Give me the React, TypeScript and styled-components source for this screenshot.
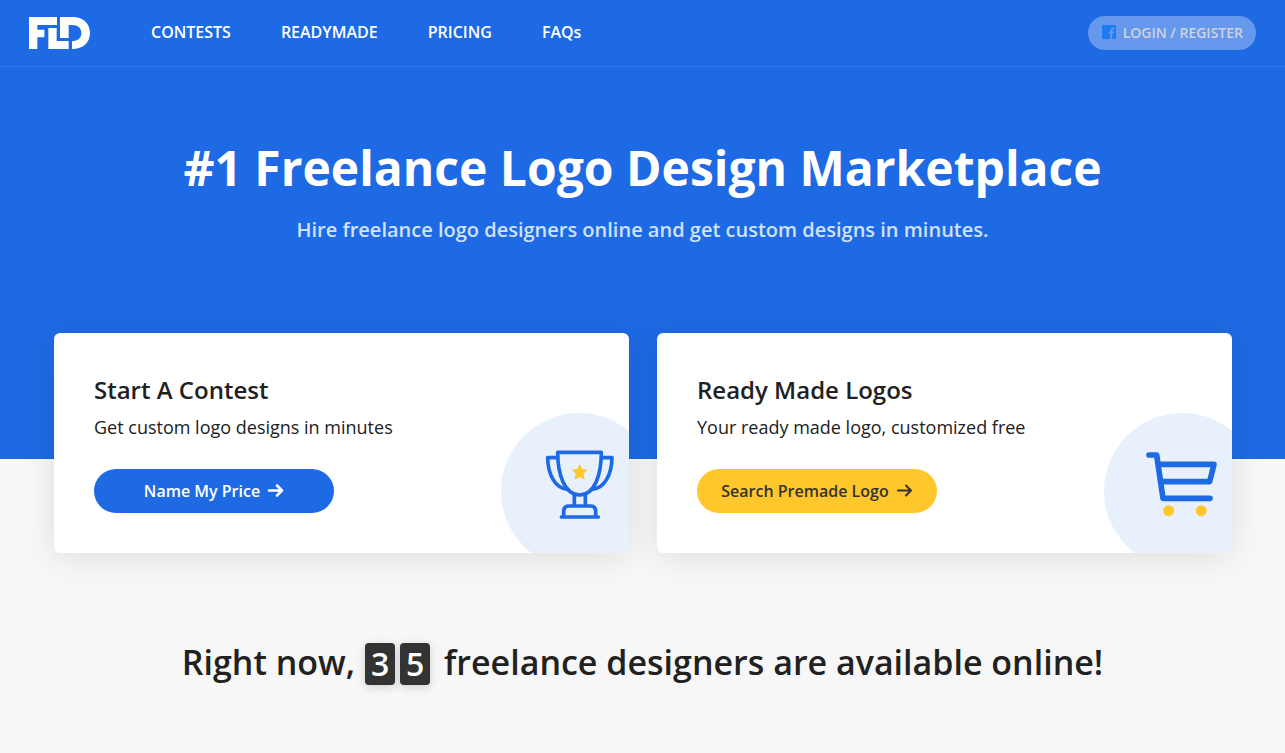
import React from "react";
import styled, { createGlobalStyle, css } from "styled-components";

const blue = "#1e6ae4";
const yellow = "#ffc72c";

const GlobalStyle = createGlobalStyle`
  *, *::before, *::after { box-sizing: border-box; }
  body {
    margin: 0;
    background: #f7f7f7;
    color: #212529;
    font-family: "Open Sans", "Noto Sans", sans-serif;
  }
`;

const Top = styled.div`
  background: ${blue};
  padding-bottom: 126px;
`;

const Header = styled.header`
  display: flex;
  align-items: center;
  height: 67px;
  padding: 0 29px;
  border-bottom: 1px solid #3578e8;
`;

const HomeLink = styled.a`
  display: block;
  width: 61px;
  height: 32px;
  margin-right: 61px;
  svg { display: block; }
`;

const Nav = styled.nav`
  display: flex;
  gap: 50px;
  padding-bottom: 2px;
`;

const NavLink = styled.a`
  color: #fff;
  font-size: 16px;
  font-weight: 600;
  line-height: 24px;
  text-decoration: none;
`;

const LoginButton = styled.button`
  display: flex;
  align-items: center;
  gap: 6px;
  height: 34px;
  margin-left: auto;
  padding: 0 13px 2px;
  border: 0;
  border-radius: 17px;
  background: #6698ed;
  color: #cdd4df;
  font-family: inherit;
  font-size: 14px;
  font-weight: 600;
  cursor: pointer;
`;

const Intro = styled.section`
  padding: 66px 20px 88px;
  text-align: center;
`;

const Title = styled.h1`
  margin: 0 0 12px;
  color: #fff;
  font-size: 48px;
  font-weight: 700;
  line-height: 70px;
`;

const Subtitle = styled.p`
  margin: 0;
  color: #d2e1fa;
  font-size: 20px;
  font-weight: 600;
  line-height: 30px;
`;

const Cards = styled.main`
  display: grid;
  grid-template-columns: 1fr 1fr;
  gap: 28px;
  margin-top: -126px;
  padding: 0 53px 0 54px;
`;

const Card = styled.section`
  position: relative;
  overflow: hidden;
  padding: 40px;
  border-radius: 6px;
  background: #fff;
`;

const CardShadow = styled.div`
  border-radius: 6px;
  box-shadow: 0 4px 32px rgba(0, 0, 0, 0.1);
`;

const CardTitle = styled.h2`
  margin: 0 0 4px;
  color: #212121;
  font-size: 24px;
  font-weight: 600;
  line-height: 34px;
`;

const CardText = styled.p`
  margin: 0 0 26px;
  color: #212121;
  font-size: 18px;
  line-height: 32px;
`;

const CardButton = styled.button<{ $accent?: boolean }>`
  display: flex;
  align-items: center;
  justify-content: center;
  gap: 7px;
  width: 240px;
  height: 44px;
  padding: 0;
  border: 0;
  border-radius: 22px;
  font-family: inherit;
  font-size: 16px;
  font-weight: 600;
  cursor: pointer;
  ${({ $accent }) =>
    $accent
      ? css`background: ${yellow}; color: #333;`
      : css`background: ${blue}; color: #fff;`}
`;

const Disc = styled.div`
  position: absolute;
  right: -28px;
  bottom: -16px;
  width: 156px;
  height: 156px;
  border-radius: 50%;
  background: #e8f0fc;
  svg { display: block; }
`;

const Online = styled.p`
  display: flex;
  align-items: center;
  justify-content: center;
  margin: 0;
  padding: 85px 20px 64px;
  color: #212121;
  font-size: 34px;
  font-weight: 600;
  line-height: 48px;
`;

const Counter = styled.span`
  display: flex;
  gap: 5px;
  margin: 4px 14px 0 10px;
`;

const Digit = styled.span`
  width: 30px;
  height: 42px;
  border-radius: 4px;
  background: #333;
  box-shadow: 0 2px 10px rgba(0, 0, 0, 0.16);
  color: #fff;
  font-size: 32px;
  line-height: 42px;
  text-align: center;
`;

const Logo = () => (
  <svg width="61" height="32" viewBox="0 0 183 96" fill="#fff" aria-hidden="true">
    <path d="M0 0H84V24H25V38H46V61H25V96H0Z" />
    <path d="M58 33H83V72H119V96H58Z" />
    <path d="M93 0H131C163 0 183 20 183 48C183 76 163 96 129 96V73C147 72 157 63 157 48C157 33 147 24 129 24H119V63H93Z" />
  </svg>
);

const Facebook = () => (
  <svg width="16" height="16" viewBox="0 0 16 16" aria-hidden="true">
    <rect x="1" y="1" width="14" height="14" rx="1" fill="#1d7cf2" />
    <path d="M9.3 15V9.6H7.7V7.5h1.6V6.2c0-1.7 1-2.6 2.5-2.6h1.4v1.9h-1c-.7 0-.9.4-.9.9v1.1h1.8l-.3 2.1h-1.5V15z" fill="#6698ed" />
  </svg>
);

const Arrow = ({ heavy = false }: { heavy?: boolean }) => (
  <svg width="17" height="14" viewBox="0 0 17 14" fill="none" stroke="currentColor" strokeWidth={heavy ? 2.6 : 2} strokeLinecap="round" strokeLinejoin="round" aria-hidden="true">
    <path d="M2 6.500H15M10 1.500L15 6.500L10 11.500" />
  </svg>
);

const Trophy = () => (
  <svg width="156" height="156" viewBox="33 39 468 468" fill="none" stroke={blue} strokeWidth="11" strokeLinejoin="round" strokeLinecap="round" aria-hidden="true">
    <path d="M203 157H334C334 222 315 285 269 285C223 285 203 222 203 157Z" />
    <path d="M203 173H173C174 222 194 266 235 269" />
    <path d="M335 173H366C365 222 345 266 304 269" />
    <path d="M253 284V315M286 284V315" />
    <path d="M214 351H325M221 349V334Q221 318 237 318H301Q317 318 317 334V349" />
    <path d="M269 192L276 207L293 209L281 221L284 239L269 231L254 239L257 221L245 209L262 207Z" fill={yellow} stroke="none" />
  </svg>
);

const Cart = () => (
  <svg width="156" height="156" viewBox="42 39 468 468" fill="none" stroke={blue} strokeWidth="17" strokeLinejoin="round" strokeLinecap="round" aria-hidden="true">
    <path d="M177 165H200L219 295H360" />
    <path d="M206 193H372L359 245H213" />
    <circle cx="236" cy="332" r="16.500" fill={yellow} stroke="none" />
    <circle cx="334" cy="332" r="16.500" fill={yellow} stroke="none" />
  </svg>
);

const links = ["CONTESTS", "READYMADE", "PRICING", "FAQs"];

export default function App() {
  return (
    <>
      <GlobalStyle />
      <Top>
        <Header>
          <HomeLink href="#" aria-label="FLD"><Logo /></HomeLink>
          <Nav>
            {links.map((label) => (
              <NavLink key={label} href="#">{label}</NavLink>
            ))}
          </Nav>
          <LoginButton type="button"><Facebook />LOGIN / REGISTER</LoginButton>
        </Header>
        <Intro>
          <Title>#1 Freelance Logo Design Marketplace</Title>
          <Subtitle>Hire freelance logo designers online and get custom designs in minutes.</Subtitle>
        </Intro>
      </Top>
      <Cards>
        <CardShadow>
          <Card>
            <CardTitle>Start A Contest</CardTitle>
            <CardText>Get custom logo designs in minutes</CardText>
            <CardButton type="button">Name My Price<Arrow heavy /></CardButton>
            <Disc><Trophy /></Disc>
          </Card>
        </CardShadow>
        <CardShadow>
          <Card>
            <CardTitle>Ready Made Logos</CardTitle>
            <CardText>Your ready made logo, customized free</CardText>
            <CardButton type="button" $accent>Search Premade Logo<Arrow /></CardButton>
            <Disc><Cart /></Disc>
          </Card>
        </CardShadow>
      </Cards>
      <Online>
        Right now,
        <Counter><Digit>3</Digit><Digit>5</Digit></Counter>
        freelance designers are available online!
      </Online>
    </>
  );
}
